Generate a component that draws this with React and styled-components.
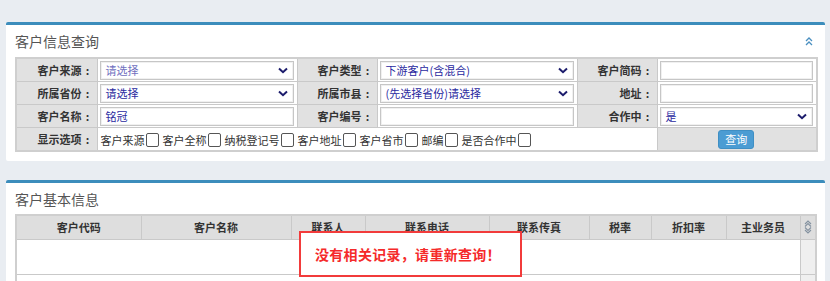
import React from 'react';
import styled, { createGlobalStyle } from 'styled-components';

const GlobalStyle = createGlobalStyle`
	body {
		margin: 0;
		background: #e9edf2;
		font-family: "Noto Sans CJK SC", "Liberation Sans", sans-serif;
	}
`;

const Page = styled.div`
	padding: 22px 5px 0 6px;
	position: relative;
	height: 259px;
	overflow: hidden;
`;

const Panel = styled.section`
	background: #fff;
	border-top: 3px solid #3c8dbc;
	border-radius: 2px;
	margin-bottom: ${p => p.gap || 0}px;
	padding: 0 9px ${p => p.bottom || 0}px;
`;

const PanelHead = styled.div`
	display: flex;
	align-items: center;
	justify-content: space-between;
	height: ${p => p.h || 32}px;
`;

const PanelTitle = styled.h3`
	margin: 0;
	font-size: 14px;
	font-weight: 400;
	color: #555;
`;

const Table = styled.table`
	width: 801px;
	border-collapse: collapse;
	table-layout: fixed;
	border: 2px solid #cfcfcf;
	font-size: 11px;
	color: #333;
`;

const Label = styled.td`
	background: #e1e1e1;
	border: 1px solid #c9c9c9;
	text-align: right;
	font-weight: 700;
	padding: 0 3px 0 0;
	line-height: 22px;
	height: 22px;
	box-sizing: border-box;
	white-space: nowrap;
`;

const Colon = styled.span`
	display: inline-block;
	width: 12px;
	text-align: center;
`;

const Field = styled.td`
	border: 1px solid #c9c9c9;
	padding: 2px 3px 1px 2px;
	height: 22px;
	box-sizing: border-box;
	line-height: 14px;
	background: ${p => (p.gray ? '#e1e1e1' : '#fff')};
	text-align: ${p => (p.center ? 'center' : 'left')};
`;

const Box = styled.div`
	box-sizing: border-box;
	height: 19px;
	border: 1px solid #c6c6c6;
	box-shadow: inset 0 0 0 1px #f0f0f0;
	display: flex;
	align-items: center;
	justify-content: space-between;
	padding: 0 5px 0 5px;
	color: ${p => (p.muted ? '#7070c0' : '#2a2aa0')};
	font-size: 11px;
	line-height: 17px;
	background: #fff;
`;

const Chevron = () => (
	<svg width="10" height="7" viewBox="0 0 10 7">
		<path d="M1 1.5 L5 5.2 L9 1.5" fill="none" stroke="#1c1c6c" strokeWidth="2" />
	</svg>
);

const Select = ({ value, muted }) => (
	<Box muted={muted}>
		<span>{value}</span>
		<Chevron />
	</Box>
);

const Options = styled.div`
	display: flex;
	align-items: center;
	height: 19px;
	font-size: 11px;
	color: #333;
	gap: 4px;
	padding-left: 1px;
`;

const Option = styled.label`
	display: flex;
	align-items: center;
	gap: 1px;
`;

const Check = styled.span`
	box-sizing: border-box;
	width: 13px;
	height: 14px;
	border: 1px solid #555;
	border-radius: 2px;
	background: #fff;
	display: inline-block;
`;

const Button = styled.button`
	display: block;
	margin: 0 auto;
	background: #4b9cd3;
	color: #fff;
	border: 1px solid #3f8fc4;
	border-radius: 3px;
	width: 36px;
	height: 19px;
	font-size: 11px;
	font-family: inherit;
	padding: 0;
	line-height: 17px;
`;

const Collapse = () => (
	<svg width="8" height="9" viewBox="0 0 8 9" style={{ marginRight: 3 }}>
		<path d="M1 4 L4 1 L7 4 M1 8 L4 5 L7 8" fill="none" stroke="#4a8fc0" strokeWidth="1.3" />
	</svg>
);

const Head = styled.th`
	background: #dedede;
	border: 1px solid #c9c9c9;
	height: 24px;
	box-sizing: border-box;
	font-weight: 700;
	font-size: 11px;
	color: #333;
	padding: 0;
`;

const Cell = styled.td`
	border: 1px solid #c9c9c9;
	border-width: 1px 0 1px 0;
	height: ${p => p.h || 35}px;
	box-sizing: border-box;
	padding: 0;
	background: ${p => (p.scroll ? '#efefef' : '#fff')};
	border-left: ${p => (p.scroll ? '1px solid #c9c9c9' : '0')};
`;

const Sort = () => (
	<svg width="8" height="14" viewBox="0 0 8 14" style={{ display: 'block', margin: '0 auto' }}>
		<path d="M1 4 L4 1 L7 4 M1 6.5 L4 3.5 L7 6.5 M1 7.5 L4 10.5 L7 7.5 M1 10 L4 13 L7 10" fill="none" stroke="#8492a0" strokeWidth="1.1" />
	</svg>
);

const Notice = styled.div`
	position: absolute;
	left: 299px;
	top: 231px;
	width: 223px;
	height: 46px;
	box-sizing: border-box;
	border: 2px solid #f23b3b;
	background: #fff;
	color: #f52a2a;
	font-size: 14px;
	font-weight: 700;
	letter-spacing: 0.3px;
	display: flex;
	align-items: center;
	padding-left: 14px;
`;

const searchRows = [
	[
		['客户来源', <Select value="请选择" muted />],
		['客户类型', <Select value="下游客户(含混合)" />],
		['客户简码', <Box />],
	],
	[
		['所属省份', <Select value="请选择" />],
		['所属市县', <Select value="(先选择省份)请选择" />],
		['地址', <Box />],
	],
	[
		['客户名称', <Box>铭冠</Box>],
		['客户编号', <Box />],
		['合作中', <Select value="是" />],
	],
];

const showOptions = ['客户来源', '客户全称', '纳税登记号', '客户地址', '客户省市', '邮编', '是否合作中'];

const columns = [
	['客户代码', 125], ['客户名称', 150], ['联系人', 74], ['联系电话', 124],
	['联系传真', 100], ['税率', 62], ['折扣率', 75], ['主业务员', 74],
];

export default function App() {
	return (
		<>
			<GlobalStyle />
			<Page>
				<Panel gap={19} bottom={9}>
					<PanelHead>
						<PanelTitle>客户信息查询</PanelTitle>
						<Collapse />
					</PanelHead>
					<Table>
						<colgroup>
							<col style={{ width: 81 }} />
							<col style={{ width: 200 }} />
							<col style={{ width: 80 }} />
							<col style={{ width: 200 }} />
							<col style={{ width: 80 }} />
							<col style={{ width: 160 }} />
						</colgroup>
						<tbody>
							{searchRows.map((row, i) => (
								<tr key={i}>
									{row.map(([label, input]) => (
										<React.Fragment key={label}>
											<Label>{label}<Colon>:</Colon></Label>
											<Field>{input}</Field>
										</React.Fragment>
									))}
								</tr>
							))}
							<tr>
								<Label>显示选项<Colon>:</Colon></Label>
								<Field colSpan={4}>
									<Options>
										{showOptions.map(o => (
											<Option key={o}>{o}<Check /></Option>
										))}
									</Options>
								</Field>
								<Field gray center><Button>查询</Button></Field>
							</tr>
						</tbody>
					</Table>
				</Panel>
				<Panel bottom={20}>
					<PanelHead h={31}>
						<PanelTitle>客户基本信息</PanelTitle>
					</PanelHead>
					<Table>
						<colgroup>
							{columns.map(([n, w]) => <col key={n} style={{ width: w }} />)}
							<col style={{ width: 16 }} />
						</colgroup>
						<thead>
							<tr>
								{columns.map(([n]) => <Head key={n}>{n}</Head>)}
								<Head><Sort /></Head>
							</tr>
						</thead>
						<tbody>
							<tr>
								<Cell colSpan={8} />
								<Cell scroll />
							</tr>
							<tr>
								<Cell colSpan={8} h={20} />
								<Cell scroll h={20} />
							</tr>
						</tbody>
					</Table>
				</Panel>
				<Notice>没有相关记录，请重新查询！</Notice>
			</Page>
		</>
	);
}
